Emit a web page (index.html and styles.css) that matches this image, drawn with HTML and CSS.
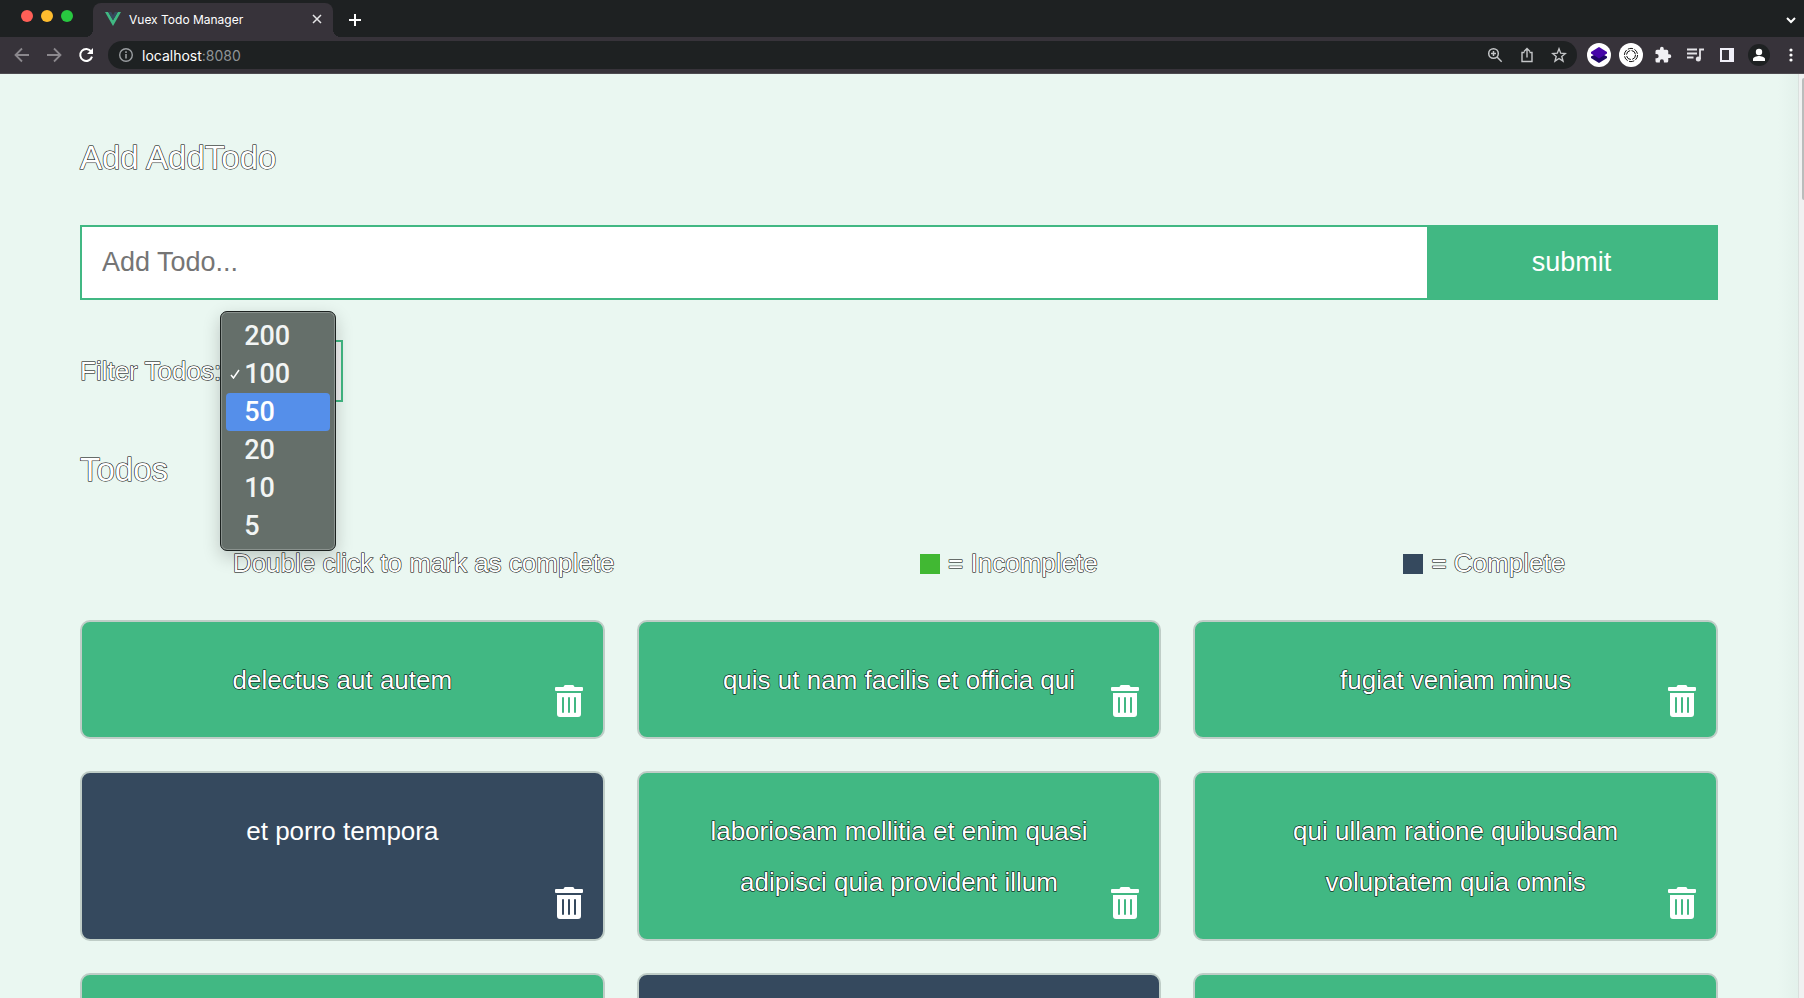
FILE: index.html
```html
<!DOCTYPE html>
<html lang="en">
<head>
<meta charset="utf-8">
<title>Vuex Todo Manager</title>
<link rel="stylesheet" href="styles.css">
</head>
<body>
<svg class="defs" aria-hidden="true">
  <symbol id="trash" viewBox="0 0 448 512"><path d="M32 464a48 48 0 0 0 48 48h288a48 48 0 0 0 48-48V128H32zm272-256a16 16 0 0 1 32 0v224a16 16 0 0 1-32 0zm-96 0a16 16 0 0 1 32 0v224a16 16 0 0 1-32 0zm-96 0a16 16 0 0 1 32 0v224a16 16 0 0 1-32 0zM432 32H312l-9.4-18.7A24 24 0 0 0 281.1 0H166.8a23.72 23.72 0 0 0-21.4 13.3L136 32H16A16 16 0 0 0 0 48v32a16 16 0 0 0 16 16h416a16 16 0 0 0 16-16V48a16 16 0 0 0-16-16z"/></symbol>
</svg>

<header class="browser">
  <div class="tabs">
    <div class="lights"><span class="light light-close"></span><span class="light light-min"></span><span class="light light-max"></span></div>
    <div class="tab">
      <svg class="favicon" viewBox="0 0 16 14"><path fill="#41b883" d="M0 0h3.2L8 8.3 12.800 0H16L8 14z"/><path fill="#35495e" d="M3.200 0h3L8 3.200 9.800 0h3L8 8.300z"/></svg>
      <span class="tab-title">Vuex Todo Manager</span>
      <button class="icon-btn tab-close" aria-label="Close tab"><svg width="10" height="10" viewBox="0 0 10 10"><path d="M1 1l8 8M9 1L1 9" stroke="#e6e6e8" stroke-width="1.500"/></svg></button>
    </div>
    <button class="icon-btn new-tab" aria-label="New tab"><svg width="12" height="12" viewBox="0 0 12 12"><path d="M6 0v12M0 6h12" stroke="#fff" stroke-width="2"/></svg></button>
    <button class="icon-btn tab-search" aria-label="Search tabs"><svg width="10" height="7" viewBox="0 0 10 7"><path d="M1 1l4 4 4-4" fill="none" stroke="#fff" stroke-width="2"/></svg></button>
  </div>
  <div class="toolbar">
    <nav class="nav">
      <button class="icon-btn" aria-label="Back"><svg width="16" height="16" viewBox="0 0 16 16"><path d="M15 8H2M8 1.500L1.500 8 8 14.500" fill="none" stroke="#8b888d" stroke-width="1.800"/></svg></button>
      <button class="icon-btn" aria-label="Forward"><svg width="16" height="16" viewBox="0 0 16 16"><path d="M1 8h13M8 1.500L14.500 8 8 14.500" fill="none" stroke="#8b888d" stroke-width="1.800"/></svg></button>
      <button class="icon-btn" aria-label="Reload"><svg width="16" height="16" viewBox="0 0 16 16"><path d="M13.200 4.500A6 6 0 1 0 14 9.600" fill="none" stroke="#fff" stroke-width="2"/><path d="M15 1v6H9z" fill="#fff"/></svg></button>
    </nav>
    <div class="address">
      <svg width="14" height="14" viewBox="0 0 14 14"><circle cx="7" cy="7" r="6.300" fill="none" stroke="#9a9da0" stroke-width="1.400"/><path d="M7 6v4.500M7 3.300v1.600" stroke="#9a9da0" stroke-width="1.600"/></svg>
      <span class="url">localhost<span class="port">:8080</span></span>
      <div class="address-actions">
        <button class="icon-btn" aria-label="Zoom"><svg width="16" height="16" viewBox="0 0 16 16"><g fill="none" stroke="#c4c6c8" stroke-width="1.500"><circle cx="6.500" cy="6.500" r="4.800"/><path d="M10 10l4.700 4.700M6.500 4v5M4 6.500h5"/></g></svg></button>
        <button class="icon-btn" aria-label="Share"><svg width="16" height="16" viewBox="0 0 16 16"><path d="M5.500 5.500H3v9h10v-9h-2.500M8 10.500V2M5 4.500l3-3 3 3" fill="none" stroke="#c4c6c8" stroke-width="1.400"/></svg></button>
        <button class="icon-btn" aria-label="Bookmark"><svg width="16" height="16" viewBox="0 0 16 16"><path d="M8 1.800l1.700 4.400 4.700.3-3.600 3 1.200 4.600L8 11.500l-4 2.600 1.200-4.600-3.600-3 4.700-.3z" fill="none" stroke="#c4c6c8" stroke-width="1.400"/></svg></button>
      </div>
    </div>
    <div class="extensions">
      <button class="icon-btn" aria-label="Layers extension"><svg width="24" height="24" viewBox="0 0 24 24"><circle cx="12" cy="12" r="12" fill="#fff"/><path d="M4 13.500l3-1.500h10l3 1.500v1.500l-8 5-8-5z" fill="#1d0764"/><path d="M12 4l8 5v1.500l-8 5-8-5V9z" fill="#4505a8"/></svg></button>
      <button class="icon-btn" aria-label="Ring extension"><svg width="24" height="24" viewBox="0 0 24 24"><circle cx="12" cy="12" r="12" fill="#fff"/><g fill="none" stroke="#111"><circle cx="12" cy="12" r="6.600" stroke-dasharray="5.400 1.500"/><circle cx="12" cy="12" r="4.500" stroke-dasharray="5.600 1.500"/></g></svg></button>
      <button class="icon-btn" aria-label="Extensions"><svg width="18" height="18" viewBox="0 0 24 24"><path fill="#f1f0f4" d="M20.500 11H19V7a2 2 0 0 0-2-2h-4V3.500a2.500 2.500 0 0 0-5 0V5H4a2 2 0 0 0-2 2v3.800h1.500a2.700 2.700 0 0 1 0 5.400H2V20a2 2 0 0 0 2 2h3.800v-1.500a2.700 2.700 0 0 1 5.400 0V22H17a2 2 0 0 0 2-2v-4h1.500a2.500 2.500 0 0 0 0-5z"/></svg></button>
      <button class="icon-btn" aria-label="Media"><svg width="17" height="14" viewBox="0 0 17 14"><path d="M0 1.500h10M0 5.500h10M0 9.500h6.500M13 11V1.500h4" fill="none" stroke="#e4e3e7" stroke-width="1.800"/><circle cx="11.300" cy="11" r="2.500" fill="#e4e3e7"/></svg></button>
      <button class="icon-btn" aria-label="Side panel"><svg width="14" height="14" viewBox="0 0 14 14"><path fill="#f1f0f8" fill-rule="evenodd" d="M0 0h14v14H0zM2 2v10h7V2z"/></svg></button>
      <button class="icon-btn" aria-label="Profile"><svg width="22" height="22" viewBox="0 0 22 22"><circle cx="11" cy="11" r="11" fill="#1e2122"/><circle cx="11" cy="8" r="3.200" fill="#fff"/><path fill="#fff" d="M5 17v-2c0-2 4-3 6-3s6 1 6 3v2z"/></svg></button>
      <button class="icon-btn" aria-label="Menu"><svg width="4" height="14" viewBox="0 0 4 14"><g fill="#fff"><circle cx="2" cy="2" r="1.600"/><circle cx="2" cy="7" r="1.600"/><circle cx="2" cy="12" r="1.600"/></g></svg></button>
    </div>
  </div>
</header>

<div class="viewport">
  <main class="page">
    <h1 class="heading">Add AddTodo</h1>
    <form class="add-form">
      <input class="add-input" type="text" placeholder="Add Todo..." aria-label="Add Todo">
      <button class="add-submit" type="submit">submit</button>
    </form>

    <div class="filter">
      <label class="outlined" for="limit">Filter Todos:</label>
      <div class="picker">
        <select id="limit" class="limit">
          <option>200</option><option selected>100</option><option>50</option><option>20</option><option>10</option><option>5</option>
        </select>
        <ul class="menu" role="listbox" aria-label="Filter Todos">
          <li class="menu-item" role="option">200</li>
          <li class="menu-item" role="option" aria-selected="true"><svg class="check" viewBox="0 0 10 10"><path d="M1 6l2.500 3L9 1" fill="none" stroke="#fff" stroke-width="1.500"/></svg>100</li>
          <li class="menu-item menu-item-active" role="option">50</li>
          <li class="menu-item" role="option">20</li>
          <li class="menu-item" role="option">10</li>
          <li class="menu-item" role="option">5</li>
        </ul>
      </div>
    </div>

    <h2 class="heading">Todos</h2>
    <div class="legend outlined">
      <span>Double click to mark as complete</span>
      <span class="key"><i class="swatch swatch-incomplete"></i>= Incomplete</span>
      <span class="key"><i class="swatch swatch-complete"></i>= Complete</span>
    </div>

    <ul class="todos">
      <li class="todo outlined">delectus aut autem<button class="icon-btn remove" aria-label="Delete"><svg><use href="#trash"/></svg></button></li>
      <li class="todo outlined">quis ut nam facilis et officia qui<button class="icon-btn remove" aria-label="Delete"><svg><use href="#trash"/></svg></button></li>
      <li class="todo outlined">fugiat veniam minus<button class="icon-btn remove" aria-label="Delete"><svg><use href="#trash"/></svg></button></li>
      <li class="todo todo-complete">et porro tempora<button class="icon-btn remove" aria-label="Delete"><svg><use href="#trash"/></svg></button></li>
      <li class="todo outlined">laboriosam mollitia et enim quasi adipisci quia provident illum<button class="icon-btn remove" aria-label="Delete"><svg><use href="#trash"/></svg></button></li>
      <li class="todo outlined">qui ullam ratione quibusdam voluptatem quia omnis<button class="icon-btn remove" aria-label="Delete"><svg><use href="#trash"/></svg></button></li>
      <li class="todo"></li>
      <li class="todo todo-complete"></li>
      <li class="todo"></li>
    </ul>
  </main>
  <div class="scrollbar"><div class="thumb"></div></div>
</div>
</body>
</html>
```

FILE: styles.css
```css
* { box-sizing: border-box; }

body {
  margin: 0;
  height: 100vh;
  display: flex;
  flex-direction: column;
  overflow: hidden;
  background: #eaf7f1;
  font-family: "Liberation Sans", Arial, sans-serif;
}

.defs { display: none; }
svg { display: block; }
ul { list-style: none; margin: 0; padding: 0; }

.icon-btn {
  display: flex;
  align-items: center;
  justify-content: center;
  padding: 0;
  border: 0;
  background: none;
}

/* Browser frame */
.browser { background: #37333a; border-bottom: 1px solid #4d4a50; font-family: Inter, sans-serif; }

.tabs { display: flex; height: 37px; background: #1e2122; }
.lights { display: flex; gap: 8px; padding: 10px 20px 0 21px; }
.light { width: 12px; height: 12px; border-radius: 50%; }
.light-close { background: #ff5f57; }
.light-min { background: #febc2e; }
.light-max { background: #28c840; }

.tab {
  position: relative;
  display: flex;
  align-items: center;
  width: 240px;
  margin-top: 3px;
  padding: 0 11px 2px 12px;
  border-radius: 8px 8px 0 0;
  background: #37333a;
  color: #fff;
}
.tab::before, .tab::after {
  content: "";
  position: absolute;
  bottom: 0;
  width: 8px;
  height: 8px;
}
.tab::before { left: -8px; background: radial-gradient(circle at 0 0, transparent 8px, #37333a 8px); }
.tab::after { right: -8px; background: radial-gradient(circle at 100% 0, transparent 8px, #37333a 8px); }
.favicon { width: 16px; height: 14px; margin-right: 8px; }
.tab-title { font-size: 12px; white-space: nowrap; }
.tab-close { margin-left: auto; }
.new-tab { margin: 3px 0 0 16px; width: 12px; height: 34px; }
.tab-search { margin: 3px 8px 0 auto; width: 10px; height: 34px; }

.toolbar { display: flex; align-items: center; height: 36px; padding: 0 11px 0 14px; }
.nav { display: flex; gap: 16px; margin-right: 14px; }
.address {
  flex: 1;
  display: flex;
  align-items: center;
  height: 28px;
  padding: 0 10px 0 11px;
  border-radius: 14px;
  background: #1e2122;
}
.url { margin-left: 9px; color: #fff; font-size: 14px; }
.port { color: #8f9396; }
.address-actions { display: flex; gap: 16px; margin-left: auto; }
.extensions { display: flex; align-items: center; gap: 8px; margin-left: 10px; }
.extensions .icon-btn { width: 24px; height: 24px; }
.extensions .icon-btn:last-child { margin-right: -10px; }

/* Page */
.viewport { flex: 1; display: flex; min-height: 0; overflow: hidden; }
.page {
  flex: 1;
  padding: 52px 80px;
  background: linear-gradient(to left, #e3f1eb, #eaf7f1 20px);
}
.scrollbar { width: 6px; padding: 4px 0 0 3px; border-left: 1px solid #d9e0dd; background: #f0f1f1; }
.thumb { height: 122px; border-radius: 4px 0 0 4px; background: #b9bdbc; }

.heading { margin: 0; color: #fff; font-size: 33px; line-height: 64px; font-weight: 400; }
.outlined { color: #fff; font-size: 26px; line-height: 51px; }
.heading, .outlined {
  -webkit-text-stroke: 1px #000;
  paint-order: stroke fill;
  text-shadow: 0 0 1px rgba(0, 0, 0, .6);
}

.add-form { display: flex; margin-top: 35px; border: 2px solid #41b883; }
.add-input {
  flex: 1;
  min-width: 0;
  height: 71px;
  padding: 0 20px;
  border: 0;
  background: #fff;
  font: 27px "Liberation Sans", Arial, sans-serif;
}
.add-input::placeholder { color: #757575; }
.add-submit {
  width: 289px;
  border: 0;
  background: #41b883;
  color: #fff;
  font: 27px "Liberation Sans", Arial, sans-serif;
}

.filter { display: flex; align-items: center; gap: 7px; margin: 40px 0 36px; }
.picker { position: relative; }
.limit {
  display: block;
  width: 115px;
  height: 62px;
  padding: 0 20px;
  border: 2px solid #41b883;
  border-radius: 0;
  background: #f0f0f0;
  color: #222;
  font: 27px "Liberation Sans", Arial, sans-serif;
  appearance: none;
}
.menu {
  position: absolute;
  z-index: 1;
  top: -29px;
  left: -8px;
  width: 116px;
  padding: 5px;
  border: 1px solid #1c2220;
  border-radius: 7px;
  background: #656f6a;
  box-shadow: inset 0 0 0 1px #8a928e, 0 6px 18px rgba(0, 0, 0, .2);
  color: #f2f5f4;
  font: 500 27px/38px Roboto, sans-serif;
}
.menu-item { position: relative; padding-left: 18px; border-radius: 4px; }
.menu-item-active { background: #558fea; color: #fff; }
.check { position: absolute; left: 4px; top: 14px; width: 10px; height: 10px; }

.legend { display: flex; justify-content: space-around; margin: 36px 0 31px; }
.key { display: flex; align-items: center; gap: 8px; }
.swatch { width: 20px; height: 20px; }
.swatch-incomplete { background: #41b833; }
.swatch-complete { background: #35495e; }

.todos { display: grid; grid-template-columns: repeat(3, 1fr); gap: 32px; }
.todo {
  position: relative;
  min-height: 119px;
  padding: 33px 32px 31px;
  border: 2px solid #bfcdc7;
  border-radius: 10px;
  background: #41b883;
  color: #fff;
  font-size: 26px;
  line-height: 51px;
  text-align: center;
}
.todo-complete { background: #35495e; }
.remove { position: absolute; right: 20px; bottom: 20px; }
.remove svg { width: 28px; height: 32px; fill: #fff; }
```
